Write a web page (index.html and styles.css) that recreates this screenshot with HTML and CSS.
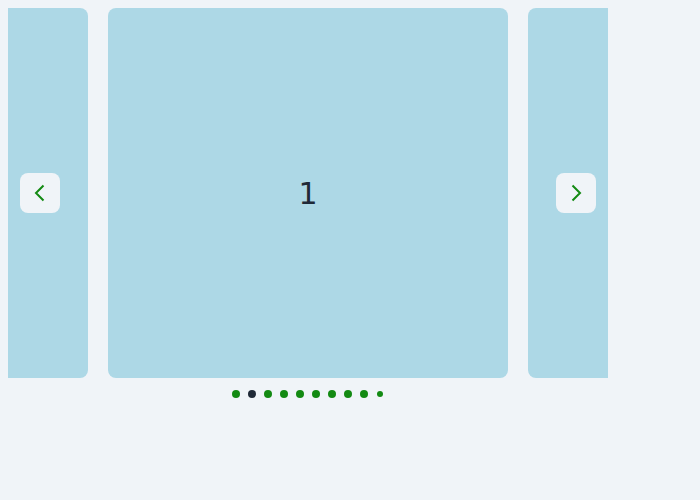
FILE: index.html
```html
<!DOCTYPE html>
<html>
<head>
<meta charset="utf-8">
<link rel="stylesheet" href="styles.css">
</head>
<body>
<div class="carousel">
  <div class="viewport">
    <div class="track">
      <div class="slide">10</div>
      <div class="slide">1</div>
      <div class="slide">2</div>
    </div>
    <button class="nav prev" aria-label="Previous">
      <svg width="20" height="20" viewBox="0 0 20 20"><path d="M13.5 2.5 L6 10 L13.5 17.5" fill="none" stroke="#138a13" stroke-width="2"/></svg>
    </button>
    <button class="nav next" aria-label="Next">
      <svg width="20" height="20" viewBox="0 0 20 20"><path d="M6.5 2.5 L14 10 L6.5 17.5" fill="none" stroke="#138a13" stroke-width="2"/></svg>
    </button>
  </div>
  <div class="dots">
    <span class="dot"></span>
    <span class="dot active"></span>
    <span class="dot"></span>
    <span class="dot"></span>
    <span class="dot"></span>
    <span class="dot"></span>
    <span class="dot"></span>
    <span class="dot"></span>
    <span class="dot"></span>
    <span class="dot small"></span>
  </div>
</div>
</body>
</html>
```
FILE: styles.css
```css
html, body {
  margin: 0;
  background: #f0f4f8;
}
body {
  padding: 8px;
  font-family: "DejaVu Sans", sans-serif;
}
.carousel {
  width: 600px;
}
.viewport {
  position: relative;
  overflow: hidden;
  width: 600px;
}
.track {
  display: flex;
  gap: 20px;
  margin-left: -320px;
}
.slide {
  flex: 0 0 400px;
  height: 370px;
  background: #add8e6;
  border-radius: 8px;
  display: flex;
  align-items: center;
  justify-content: center;
  font-size: 30px;
  color: #1f2937;
}
.nav {
  position: absolute;
  top: 165px;
  width: 40px;
  height: 40px;
  padding: 0;
  border: none;
  border-radius: 8px;
  background: #f0f4f8;
  display: flex;
  align-items: center;
  justify-content: center;
  cursor: pointer;
}
.prev { left: 12px; }
.next { right: 12px; }
.dots {
  display: flex;
  justify-content: center;
  align-items: center;
  gap: 8px;
  margin-top: 12px;
  height: 8px;
}
.dot {
  width: 8px;
  height: 8px;
  border-radius: 50%;
  background: #138a13;
}
.dot.active { background: #1f2937; }
.dot.small {
  width: 6px;
  height: 6px;
  margin: 0 1px;
}
```
